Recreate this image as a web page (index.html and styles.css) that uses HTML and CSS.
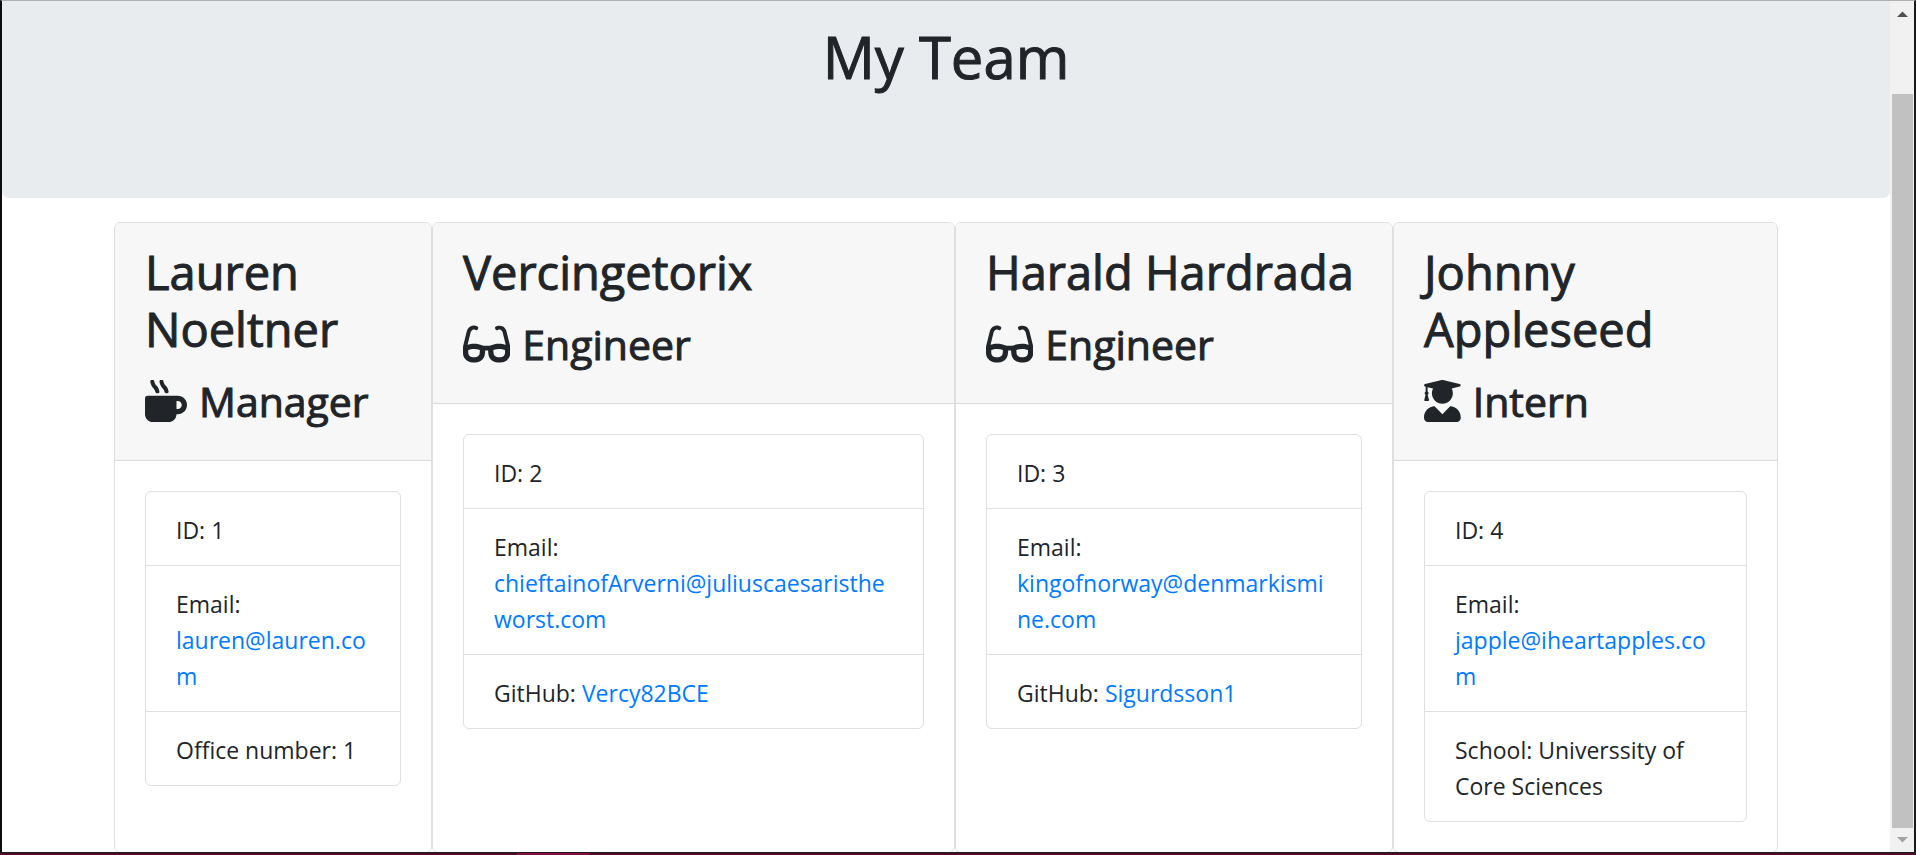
FILE: index.html
```html
<!DOCTYPE html>
<html lang="en">
<head>
<meta charset="utf-8">
<meta name="viewport" content="width=device-width, initial-scale=1">
<title>My Team</title>
<link rel="stylesheet" href="styles.css">
</head>
<body>
<div class="window">
  <div class="viewport">
    <div class="page">
      <header class="jumbotron"><h1 class="title">My Team</h1></header>
      <main class="team">
        <section class="card">
          <div class="card-header">
            <h2 class="name">Lauren Noeltner</h2>
            <h3 class="role"><svg class="icon" viewBox="0 0 512 512" aria-hidden="true"><path d="M127.1 146.5c1.3 7.7 8 13.5 16 13.5h16.5c9.8 0 17.6-8.5 16.3-18-3.8-28.2-16.4-54.2-36.6-74.7-14.4-14.7-23.6-33.3-26.4-53.5C111.8 5.9 105 0 96.8 0H80.4C70.6 0 63 8.5 64.1 18c3.9 31.9 18 61.3 40.6 84.4 12 12.2 19.7 27.5 22.4 44.1zm112 0c1.3 7.7 8 13.5 16 13.5h16.5c9.8 0 17.6-8.5 16.3-18-3.8-28.2-16.4-54.2-36.6-74.7-14.4-14.7-23.6-33.3-26.4-53.5C223.8 5.9 217 0 208.8 0h-16.4c-9.8 0-17.5 8.5-16.3 18 3.9 31.9 18 61.3 40.6 84.4 12 12.2 19.7 27.5 22.4 44.1zM400 192H32c-17.7 0-32 14.3-32 32v192c0 53 43 96 96 96h192c53 0 96-43 96-96h16c61.8 0 112-50.2 112-112s-50.2-112-112-112zm0 160h-16v-96h16c26.5 0 48 21.5 48 48s-21.5 48-48 48z"/></svg>Manager</h3>
          </div>
          <div class="card-body">
            <ul class="details">
              <li class="detail">ID: 1</li>
              <li class="detail">Email: <a class="link" href="mailto:lauren@lauren.com">lauren@lauren.com</a></li>
              <li class="detail">Office number: 1</li>
            </ul>
          </div>
        </section>
        <section class="card">
          <div class="card-header">
            <h2 class="name">Vercingetorix</h2>
            <h3 class="role"><svg class="icon" viewBox="0 0 576 512" aria-hidden="true"><path id="glasses" d="M574.1 280.37L528.75 98.66c-5.91-23.7-21.59-44.05-43-55.81-21.44-11.73-46.97-14.11-70.19-6.33l-15.25 5.08c-8.39 2.79-12.92 11.86-10.12 20.24l5.06 15.18c2.79 8.38 11.85 12.91 20.23 10.12l13.18-4.39c10.87-3.62 23-3.57 33.16 1.73 10.29 5.37 17.57 14.56 20.37 25.82l38.46 153.82c-22.19-6.81-49.79-12.46-81.2-12.46-34.77 0-73.98 7.02-114.85 26.74h-73.18c-40.87-19.74-80.08-26.75-114.86-26.75-31.42 0-59.02 5.65-81.21 12.46l38.46-153.83c2.79-11.25 10.09-20.45 20.38-25.81 10.16-5.3 22.28-5.35 33.15-1.73l13.17 4.39c8.38 2.79 17.44-1.74 20.23-10.12l5.06-15.18c2.8-8.38-1.73-17.45-10.12-20.24l-15.25-5.08c-23.22-7.78-48.75-5.41-70.19 6.33-21.41 11.77-37.09 32.11-43 55.8L1.9 280.37A64.218 64.218 0 0 0 0 295.86v70.25C0 429.01 51.58 480 115.2 480h37.12c60.28 0 110.37-45.94 114.88-105.37l2.93-38.63h35.75l2.93 38.63C313.31 434.06 363.4 480 423.68 480h37.12c63.62 0 115.2-50.99 115.2-113.88v-70.25c0-5.23-.64-10.43-1.9-15.5zm-370.72 89.42c-1.97 25.91-24.4 46.21-51.06 46.21H115.2C86.97 416 64 393.62 64 366.11v-37.54c18.12-6.49 43.42-12.92 72.58-12.92 23.86 0 47.26 4.33 69.93 12.92l-3.13 41.22zM512 366.12c0 27.51-22.97 49.88-51.2 49.88h-37.12c-26.67 0-49.1-20.3-51.06-46.21l-3.13-41.22c22.67-8.59 46.08-12.92 69.95-12.92 29.12 0 54.43 6.44 72.55 12.93v37.54z"/></svg>Engineer</h3>
          </div>
          <div class="card-body">
            <ul class="details">
              <li class="detail">ID: 2</li>
              <li class="detail">Email: <a class="link" href="mailto:chieftainofArverni@juliuscaesaristheworst.com">chieftainofArverni@juliuscaesaristheworst.com</a></li>
              <li class="detail">GitHub: <a class="link" href="https://github.com/Vercy82BCE">Vercy82BCE</a></li>
            </ul>
          </div>
        </section>
        <section class="card">
          <div class="card-header">
            <h2 class="name">Harald Hardrada</h2>
            <h3 class="role"><svg class="icon" viewBox="0 0 576 512" aria-hidden="true"><use href="#glasses"/></svg>Engineer</h3>
          </div>
          <div class="card-body">
            <ul class="details">
              <li class="detail">ID: 3</li>
              <li class="detail">Email: <a class="link" href="mailto:kingofnorway@denmarkismine.com">kingofnorway@denmarkismine.com</a></li>
              <li class="detail">GitHub: <a class="link" href="https://github.com/Sigurdsson1">Sigurdsson1</a></li>
            </ul>
          </div>
        </section>
        <section class="card">
          <div class="card-header">
            <h2 class="name">Johnny Appleseed</h2>
            <h3 class="role"><svg class="icon" viewBox="0 0 448 512" aria-hidden="true"><path d="M319.4 320.6L224 416l-95.4-95.4C57.1 323.7 0 382.2 0 454.4v9.6c0 26.5 21.5 48 48 48h352c26.5 0 48-21.5 48-48v-9.6c0-72.2-57.1-130.7-128.6-133.8zM13.6 79.8l6.4 1.5v58.4c-7 4.2-12 11.5-12 20.3 0 8.4 4.6 15.4 11.1 19.7L3.5 242c-1.7 6.9 2.1 14 7.6 14h41.8c5.5 0 9.3-7.1 7.6-14l-15.6-62.3C51.4 175.4 56 168.4 56 160c0-8.8-5-16.1-12-20.3V87.1l66 15.9c-8.6 17.2-14 36.4-14 57 0 70.7 57.3 128 128 128s128-57.3 128-128c0-20.6-5.3-39.8-14-57l96.3-23.2c18.2-4.4 18.2-27.1 0-31.5l-190.4-46c-13-3.1-26.7-3.1-39.7 0L13.6 48.2c-18.1 4.4-18.1 27.2 0 31.6z"/></svg>Intern</h3>
          </div>
          <div class="card-body">
            <ul class="details">
              <li class="detail">ID: 4</li>
              <li class="detail">Email: <a class="link" href="mailto:japple@iheartapples.com">japple@iheartapples.com</a></li>
              <li class="detail">School: Universsity of Core Sciences</li>
            </ul>
          </div>
        </section>
      </main>
    </div>
    <div class="scrollbar" aria-hidden="true">
      <svg class="arrow" viewBox="0 0 24 24"><path d="M7 16 12.500 10.500 18 16z" fill="#505050"/></svg>
      <div class="track"><div class="thumb"></div></div>
      <svg class="arrow" viewBox="0 0 24 24"><path d="M7 9 12.500 14.500 18 9z" fill="#a3a3a3"/></svg>
    </div>
  </div>
  <div class="taskbar" aria-hidden="true"><div class="taskbar-active"></div></div>
</div>
</body>
</html>
```

FILE: styles.css
```css
*, *::before, *::after { box-sizing: border-box; }

body {
  margin: 0;
  overflow: hidden;
  background: #fff;
  color: #212529;
  font-family: "Segoe UI", "Open Sans", sans-serif;
  font-size: 23px;
  line-height: 36px;
}

h1, h2, h3, ul { margin: 0; padding: 0; }

/* Medium weight headings */
h1, h2, h3 {
  font-weight: 400;
  -webkit-text-stroke: 1px currentColor;
}

.window {
  display: flex;
  flex-direction: column;
  height: 100vh;
}

.viewport {
  flex: 1;
  min-height: 0;
  display: flex;
  border: solid #1b1b1b;
  border-width: 1px 2px 0;
  border-top-color: #b0b0b0;
  border-left-color: #0c0c0c;
}

.page {
  flex: 1;
  min-width: 0;
  overflow: hidden;
}

.jumbotron {
  padding: 20px 48px 105px;
  margin-bottom: 24px;
  border-radius: 0 0 7px 7px;
  background: #e9ecef;
  text-align: center;
}

.title {
  font-size: 58px;
  line-height: 72px;
}

.team {
  display: grid;
  grid-template-columns: 318fr 523fr 438fr 385fr;
  max-width: 1664px;
  margin: 0 auto;
}

.card {
  min-width: 0;
  border: 1px solid #dfdfdf;
  border-radius: 6px;
  background: #fff;
}

.card-header {
  padding: 21px 30px 28px;
  border-bottom: 1px solid #d9d9d9;
  border-radius: 5px 5px 0 0;
  background: #f7f7f7;
}

.name {
  margin-bottom: 12px;
  font-size: 47px;
  line-height: 57px;
}

.role {
  display: flex;
  align-items: center;
  gap: 12px;
  font-size: 41px;
  line-height: 62px;
}

.icon {
  flex: none;
  height: 42px;
  fill: currentColor;
  stroke: none;
}

.card-body { padding: 30px; }

.details {
  list-style: none;
  border: 1px solid #dfdfdf;
  border-radius: 6px;
}

.detail {
  padding: 20px 30px 17px;
  overflow-wrap: break-word;
}

.detail + .detail { border-top: 1px solid #dfdfdf; }

.link {
  color: #007bff;
  text-decoration: none;
}

.scrollbar {
  display: flex;
  flex-direction: column;
  width: 24px;
  background: #f1f1f1;
}

.arrow { flex: none; height: 24px; }

.track {
  flex: 1;
  display: flex;
  padding: 69px 1px 0 2px;
}

.thumb { flex: 1; background: #c1c1c1; }

.taskbar {
  display: flex;
  height: 3px;
  padding-left: 27%;
  border-top: 1px solid #1b1b1b;
  background: #4a0d2b;
}

.taskbar-active { width: 73px; background: #8c0a41; }
```
